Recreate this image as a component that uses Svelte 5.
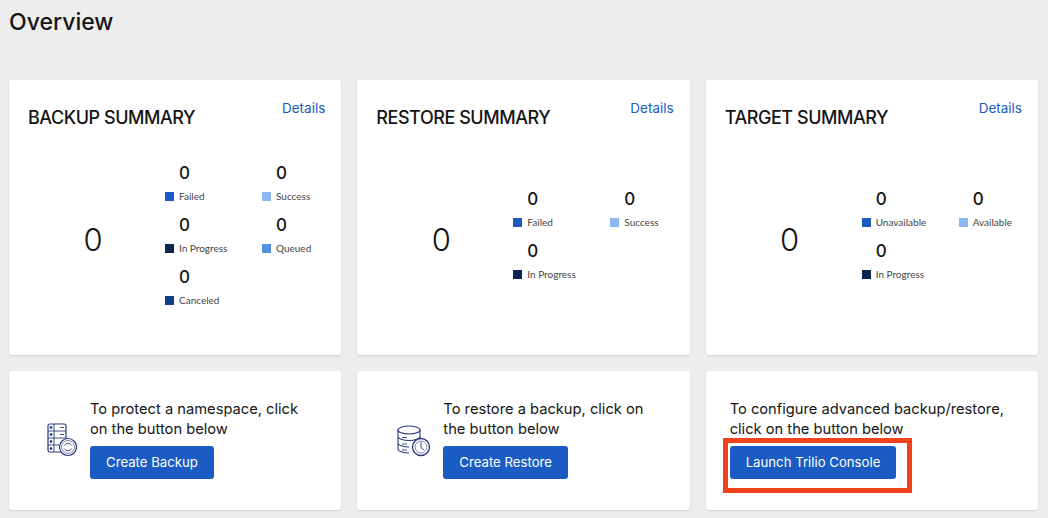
<script>
  const summaries = [
    {
      title: 'BACKUP SUMMARY',
      stats: [
        { label: 'Failed', color: '#1a5bc4' },
        { label: 'Success', color: '#8bb8f1' },
        { label: 'In Progress', color: '#0c2652' },
        { label: 'Queued', color: '#5592e6' },
        { label: 'Canceled', color: '#123f8c' }
      ]
    },
    {
      title: 'RESTORE SUMMARY',
      stats: [
        { label: 'Failed', color: '#1a5bc4' },
        { label: 'Success', color: '#8bb8f1' },
        { label: 'In Progress', color: '#0c2652' }
      ]
    },
    {
      title: 'TARGET SUMMARY',
      stats: [
        { label: 'Unavailable', color: '#1a5bc4' },
        { label: 'Available', color: '#8bb8f1' },
        { label: 'In Progress', color: '#0c2652' }
      ]
    }
  ];
</script>

<main class="page">
  <h1>Overview</h1>
  <div class="grid">
    {#each summaries as s}
      <section class="card summary">
        <div class="head">
          <h2>{s.title}</h2>
          <a href="#details">Details</a>
        </div>
        <div class="body">
          <div class="total">0</div>
          <div class="stats">
            {#each s.stats as stat}
              <div class="stat">
                <div class="num">0</div>
                <div class="label"><i style="background: {stat.color}"></i>{stat.label}</div>
              </div>
            {/each}
          </div>
        </div>
      </section>
    {/each}

    <section class="card action first">
      <svg class="icon" width="30" height="34" viewBox="0 0 30 34" fill="none" stroke="#2a3b78" stroke-width="0.9">
        <rect x="1" y="1" width="18" height="28" rx="2" stroke-width="1.2" />
        <path d="M7 1v28M1 8h18M1 15h18M1 22h18" />
        <circle cx="4" cy="4.500" r="1" fill="#2a3b78" />
        <circle cx="4" cy="11.500" r="1" fill="#2a3b78" />
        <circle cx="4" cy="18.500" r="1" fill="#2a3b78" />
        <circle cx="4" cy="25.500" r="1" fill="#2a3b78" />
        <path d="M13 4.500h4M13 11.500h4" />
        <circle cx="21" cy="24" r="8.500" fill="#fff" stroke-width="1.200" />
        <circle cx="21" cy="24" r="6.500" stroke-width="0.600" />
        <path d="M17.500 22.500a4 4 0 0 1 6.500-1l1 1M24.500 25.500a4 4 0 0 1-6.500 1l-1-1" />
      </svg>
      <div class="text">
        <p>To protect a namespace, click on the button below</p>
        <button>Create Backup</button>
      </div>
    </section>

    <section class="card action second">
      <svg class="icon" width="34" height="32" viewBox="0 0 34 32" fill="none" stroke="#2a3b78" stroke-width="0.9">
        <ellipse cx="12" cy="5" rx="11" ry="4" stroke-width="1.100" />
        <path d="M1 5v19c0 2 5 4 11 4M23 5v10M1 11.500c0 2 5 4 11 4s11-2 11-4M1 18c0 2 5 4 11 4" stroke-width="1.100" />
        <path d="M5 12.500h5M5 19h5M5 25h5" />
        <circle cx="24" cy="22" r="8.500" fill="#fff" stroke-width="1.300" />
        <circle cx="24" cy="22" r="6" stroke-width="0.600" />
        <path d="M24 17v5.500l3 2.500" />
      </svg>
      <div class="text">
        <p>To restore a backup, click on the button below</p>
        <button>Create Restore</button>
      </div>
    </section>

    <section class="card action third">
      <div class="text">
        <p>To configure advanced backup/restore, click on the button below</p>
        <div class="highlighted">
          <button>Launch Trilio Console</button>
          <span class="marker"></span>
        </div>
      </div>
    </section>
  </div>
</main>

<style>
  :global(body) {
    margin: 0;
    background: #ededed;
    font-family: "Inter", "Liberation Sans", sans-serif;
    color: #151515;
  }

  .page {
    padding: 8px 10px 8px 9px;
    height: 518px;
    box-sizing: border-box;
    overflow: hidden;
  }

  h1 {
    margin: 0 0 44px;
    font-size: 23px;
    line-height: 28px;
    font-weight: 500;
  }

  .grid {
    display: grid;
    grid-template-columns: repeat(3, minmax(0, 1fr));
    grid-template-rows: 275px 139px;
    gap: 16px;
  }

  .card {
    background: #fff;
    border-radius: 3px;
    box-shadow: 0 1px 2px rgba(0, 0, 0, 0.12);
    box-sizing: border-box;
  }

  .summary {
    padding: 18px 16px 0 19px;
  }

  .head {
    display: flex;
    justify-content: space-between;
    align-items: flex-start;
    height: 64px;
  }

  h2 {
    margin: 10px 0 0;
    font-size: 18px;
    line-height: 20px;
    font-weight: 500;
    letter-spacing: -0.45px;
  }

  .head a {
    color: #1a5bc4;
    font-size: 13.500px;
    line-height: 20px;
    text-decoration: none;
  }

  .body {
    display: flex;
    align-items: center;
    height: 156px;
  }

  .total {
    flex: none;
    width: 130px;
    margin-right: 7px;
    text-align: center;
    font-size: 31px;
    line-height: 40px;
    font-weight: 300;
  }

  .stats {
    display: grid;
    grid-template-columns: 97px 60px;
    grid-auto-rows: 52px;
  }

  .num {
    padding-left: 14px;
    font-size: 17px;
    line-height: 22px;
    font-weight: 500;
  }

  .label {
    display: flex;
    align-items: center;
    gap: 5px;
    margin-top: 2px;
    font-family: "Lato", "Liberation Sans", sans-serif;
    font-size: 10px;
    line-height: 20px;
    color: #444;
    white-space: nowrap;
  }

  .label i {
    width: 9px;
    height: 9px;
  }

  .action {
    display: flex;
    align-items: flex-start;
    padding-top: 29px;
  }

  .first {
    padding-left: 38px;
  }

  .first .icon {
    margin: 23px 13px 0 0;
  }

  .second {
    padding-left: 40px;
  }

  .second .icon {
    margin: 25px 12px 0 0;
  }

  .third {
    padding-left: 24px;
  }

  p {
    margin: 0 0 7px;
    font-size: 14.700px;
    line-height: 19.500px;
    max-width: 290px;
  }

  .first p {
    max-width: 225px;
  }

  .second p {
    max-width: 210px;
  }

  button {
    display: block;
    height: 33px;
    padding: 0 16px 2px;
    border: 0;
    border-radius: 3px;
    background: #1a5bc4;
    color: #fff;
    font-family: inherit;
    font-size: 13.200px;
  }

  .highlighted {
    position: relative;
    width: max-content;
  }

  .marker {
    position: absolute;
    left: -7px;
    top: -8px;
    width: 189px;
    height: 55px;
    box-sizing: border-box;
    border: 5px solid #f0431c;
  }
</style>
